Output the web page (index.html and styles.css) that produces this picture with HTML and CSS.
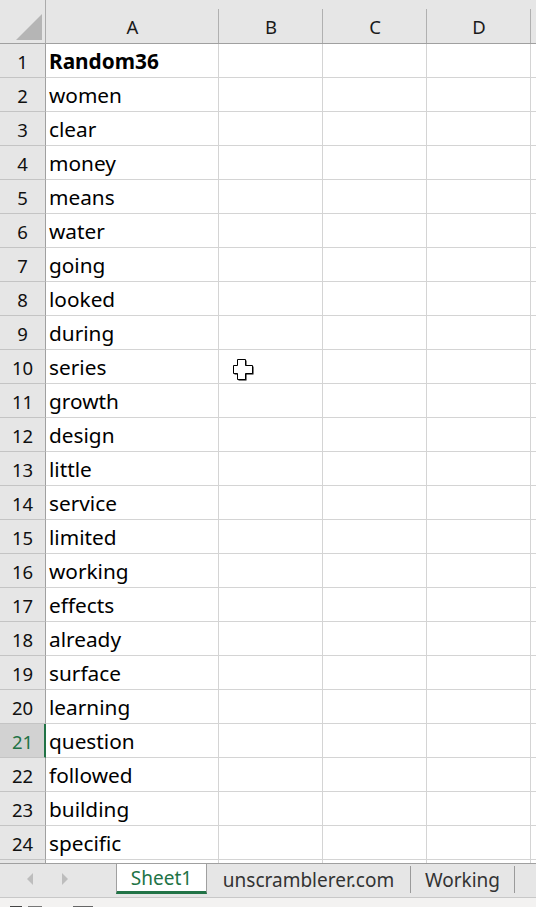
FILE: index.html
```html
<!DOCTYPE html>
<html>
<head>
<meta charset="utf-8">
<link rel="stylesheet" href="styles.css">
</head>
<body>
<div class="app">
  <div class="sheet">
    <div class="grid">
      <div class="corner"><svg width="46" height="44" viewBox="0 0 46 44"><polygon points="16,40 42,14 42,40" fill="#b5b5b5"/></svg></div>
      <div class="colhead">A</div>
      <div class="colhead">B</div>
      <div class="colhead">C</div>
      <div class="colhead">D</div>
      <div class="colhead"></div>

      <div class="rowhead">1</div><div class="cell bold">Random36</div><div class="cell"></div><div class="cell"></div><div class="cell"></div><div class="cell"></div>
      <div class="rowhead">2</div><div class="cell">women</div><div class="cell"></div><div class="cell"></div><div class="cell"></div><div class="cell"></div>
      <div class="rowhead">3</div><div class="cell">clear</div><div class="cell"></div><div class="cell"></div><div class="cell"></div><div class="cell"></div>
      <div class="rowhead">4</div><div class="cell">money</div><div class="cell"></div><div class="cell"></div><div class="cell"></div><div class="cell"></div>
      <div class="rowhead">5</div><div class="cell">means</div><div class="cell"></div><div class="cell"></div><div class="cell"></div><div class="cell"></div>
      <div class="rowhead">6</div><div class="cell">water</div><div class="cell"></div><div class="cell"></div><div class="cell"></div><div class="cell"></div>
      <div class="rowhead">7</div><div class="cell">going</div><div class="cell"></div><div class="cell"></div><div class="cell"></div><div class="cell"></div>
      <div class="rowhead">8</div><div class="cell">looked</div><div class="cell"></div><div class="cell"></div><div class="cell"></div><div class="cell"></div>
      <div class="rowhead">9</div><div class="cell">during</div><div class="cell"></div><div class="cell"></div><div class="cell"></div><div class="cell"></div>
      <div class="rowhead">10</div><div class="cell">series</div><div class="cell"></div><div class="cell"></div><div class="cell"></div><div class="cell"></div>
      <div class="rowhead">11</div><div class="cell">growth</div><div class="cell"></div><div class="cell"></div><div class="cell"></div><div class="cell"></div>
      <div class="rowhead">12</div><div class="cell">design</div><div class="cell"></div><div class="cell"></div><div class="cell"></div><div class="cell"></div>
      <div class="rowhead">13</div><div class="cell">little</div><div class="cell"></div><div class="cell"></div><div class="cell"></div><div class="cell"></div>
      <div class="rowhead">14</div><div class="cell">service</div><div class="cell"></div><div class="cell"></div><div class="cell"></div><div class="cell"></div>
      <div class="rowhead">15</div><div class="cell">limited</div><div class="cell"></div><div class="cell"></div><div class="cell"></div><div class="cell"></div>
      <div class="rowhead">16</div><div class="cell">working</div><div class="cell"></div><div class="cell"></div><div class="cell"></div><div class="cell"></div>
      <div class="rowhead">17</div><div class="cell">effects</div><div class="cell"></div><div class="cell"></div><div class="cell"></div><div class="cell"></div>
      <div class="rowhead">18</div><div class="cell">already</div><div class="cell"></div><div class="cell"></div><div class="cell"></div><div class="cell"></div>
      <div class="rowhead">19</div><div class="cell">surface</div><div class="cell"></div><div class="cell"></div><div class="cell"></div><div class="cell"></div>
      <div class="rowhead">20</div><div class="cell">learning</div><div class="cell"></div><div class="cell"></div><div class="cell"></div><div class="cell"></div>
      <div class="rowhead active">21</div><div class="cell">question</div><div class="cell"></div><div class="cell"></div><div class="cell"></div><div class="cell"></div>
      <div class="rowhead">22</div><div class="cell">followed</div><div class="cell"></div><div class="cell"></div><div class="cell"></div><div class="cell"></div>
      <div class="rowhead">23</div><div class="cell">building</div><div class="cell"></div><div class="cell"></div><div class="cell"></div><div class="cell"></div>
      <div class="rowhead">24</div><div class="cell">specific</div><div class="cell"></div><div class="cell"></div><div class="cell"></div><div class="cell"></div>
      <div class="rowhead"></div><div class="cell"></div><div class="cell"></div><div class="cell"></div><div class="cell"></div><div class="cell"></div>
    </div>
    <svg class="cursor" width="24" height="24" viewBox="0 0 24 24">
      <polygon points="6.5,2.5 14.5,2.5 14.5,8.5 21.5,8.5 21.5,16.5 14.5,16.5 14.5,22.5 6.5,22.5 6.5,16.5 2.5,16.5 2.5,8.5 6.5,8.5" fill="#000"/>
      <polygon points="5.5,1.5 13.5,1.5 13.5,7.5 20.5,7.5 20.5,15.5 13.5,15.5 13.5,21.5 5.5,21.5 5.5,15.5 1.5,15.5 1.5,7.5 5.5,7.5" fill="#fff" stroke="#000" stroke-width="1"/>
    </svg>
  </div>
  <div class="tabbar">
    <div class="nav">
      <svg width="116" height="33" viewBox="0 0 116 33"><polygon points="33,9 33,21 27,15" fill="#bdbdbd"/><polygon points="62,9 62,21 68,15" fill="#bdbdbd"/></svg>
    </div>
    <div class="tab current">Sheet1</div>
    <div class="tab t2">unscramblerer.com</div>
    <div class="tab t3">Working</div>
  </div>
  <div class="status">
    <span class="ico i1"></span><span class="ico i2"></span><span class="ico i3"></span>
  </div>
</div>
</body>
</html>
```
FILE: styles.css
```css
* { box-sizing: border-box; }
html, body { margin: 0; padding: 0; background: #fff; }
body { width: 536px; height: 907px; overflow: hidden; font-family: "Noto Sans", "Open Sans", sans-serif; color: #000; }
.app { width: 536px; height: 907px; display: flex; flex-direction: column; }
.sheet { position: relative; height: 863px; overflow: hidden; flex: none; }
.grid {
  display: grid;
  grid-template-columns: 46px 173px 104px 104px 104px 104px;
  grid-template-rows: 44px repeat(25, 34px);
  width: 635px;
}
.corner { background: #e6e6e6; border-right: 1px solid #ababab; border-bottom: 1px solid #a0a0a0; }
.corner svg { display: block; }
.colhead {
  background: #e6e6e6 linear-gradient(#b0b0b0, #b0b0b0) no-repeat right bottom / 1px 34px;
  border-bottom: 1px solid #a0a0a0;
  display: flex; align-items: center; justify-content: center;
  padding-top: 10px;
  font-size: 18.5px; color: #1a1a1a;
}
.rowhead {
  background: #e6e6e6;
  border-right: 1px solid #a0a0a0;
  border-bottom: 1px solid #c4c4c4;
  display: flex; align-items: center; justify-content: center;
  font-size: 18.5px; color: #111;
  padding-top: 1px;
}
.rowhead.active { background: #d2d2d2; color: #217346; border-right: 2px solid #217346; padding-left: 1px; }
.cell {
  border-right: 1px solid #d4d4d4;
  border-bottom: 1px solid #d4d4d4;
  display: flex; align-items: center;
  padding-left: 3px; padding-top: 1px;
  font-size: 20.8px; white-space: nowrap;
}
.cell.bold { font-weight: bold; }
.cursor { position: absolute; left: 232px; top: 358px; }
.tabbar {
  height: 35px; flex: none;
  background: #e6e6e6;
  border-top: 1px solid #a0a0a0;
  border-bottom: 1px solid #c8c8c8;
  display: flex; align-items: stretch;
}
.nav { width: 116px; flex: none; }
.nav svg { display: block; }
.tab {
  flex: none; display: flex; align-items: center; justify-content: center;
  font-size: 19px; color: #333; height: 30px;
}
.tab.current {
  width: 91px; background: #fff; color: #217346;
  border-left: 1px solid #a0a0a0; border-right: 1px solid #a0a0a0;
  border-bottom: 3px solid #217346;
}
.tab.t2 { width: 204px; border-right: 1px solid #9a9a9a; height: 27px; margin-top: 2px; }
.tab.t3 { width: 104px; border-right: 1px solid #9a9a9a; height: 27px; margin-top: 2px; }
.status { flex: 1; background: #f3f2f1; display: flex; align-items: flex-start; padding-top: 8px; }
.ico { display: block; height: 2px; border-top: 2px solid #444; }
.i1 { width: 12px; margin-left: 10px; }
.i2 { width: 14px; margin-left: 6px; border-top-color: #777; }
.i3 { width: 20px; margin-left: 31px; border: 1px solid #666; border-bottom: none; }
```
